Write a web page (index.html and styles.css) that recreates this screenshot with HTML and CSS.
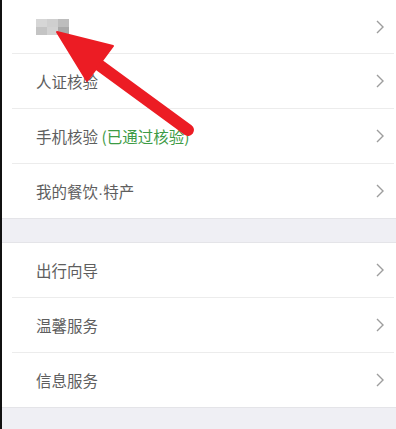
FILE: index.html
```html
<!DOCTYPE html>
<html lang="zh">
<head>
<meta charset="utf-8">
<link rel="stylesheet" href="styles.css">
</head>
<body>
<div class="screen">
  <div class="edge"></div>
  <div class="main">
    <div class="group">
      <div class="row first">
        <div class="label"><span class="blur"><i class="b1"></i><i class="b2"></i><i class="b3"></i><i class="b4"></i><i class="b5"></i><i class="b6"></i></span></div>
        <svg class="chev" viewBox="0 0 8 14"><path d="M1 1 L7 7 L1 13"/></svg>
      </div>
      <div class="row">
        <div class="label">人证核验</div>
        <svg class="chev" viewBox="0 0 8 14"><path d="M1 1 L7 7 L1 13"/></svg>
      </div>
      <div class="row">
        <div class="label">手机核验 <span class="ok">(已通过核验)</span></div>
        <svg class="chev" viewBox="0 0 8 14"><path d="M1 1 L7 7 L1 13"/></svg>
      </div>
      <div class="row">
        <div class="label">我的餐饮<span class="dot">·</span>特产</div>
        <svg class="chev" viewBox="0 0 8 14"><path d="M1 1 L7 7 L1 13"/></svg>
      </div>
    </div>
    <div class="gap"></div>
    <div class="group">
      <div class="row">
        <div class="label">出行向导</div>
        <svg class="chev" viewBox="0 0 8 14"><path d="M1 1 L7 7 L1 13"/></svg>
      </div>
      <div class="row">
        <div class="label">温馨服务</div>
        <svg class="chev" viewBox="0 0 8 14"><path d="M1 1 L7 7 L1 13"/></svg>
      </div>
      <div class="row">
        <div class="label">信息服务</div>
        <svg class="chev" viewBox="0 0 8 14"><path d="M1 1 L7 7 L1 13"/></svg>
      </div>
    </div>
    <div class="gap tail"></div>
  </div>
  <svg class="arrow" viewBox="0 0 396 429" width="396" height="429">
    <line x1="95" y1="62" x2="188" y2="130" stroke="#ec1c24" stroke-width="12" stroke-linecap="round"/>
    <polygon points="57,32 113,46 87,81" fill="#ec1c24" stroke="#ec1c24" stroke-width="2" stroke-linejoin="round"/>
  </svg>
</div>
</body>
</html>
```

FILE: styles.css
```css
html, body {
  margin: 0;
  padding: 0;
  background: #fff;
}
.screen {
  position: relative;
  width: 396px;
  height: 429px;
  overflow: hidden;
  display: flex;
  font-family: "Noto Sans CJK SC", "Noto Sans", sans-serif;
}
.edge {
  width: 2px;
  background: #111;
  flex: none;
}
.main {
  flex: 1;
  display: flex;
  flex-direction: column;
}
.group {
  background: #fff;
  padding-left: 10px;
}
.row {
  height: 54px;
  display: flex;
  align-items: center;
  justify-content: space-between;
  border-bottom: 1px solid #ececec;
  padding-left: 24px;
  padding-right: 10px;
  margin-right: 2px;
}
.row.first {
  height: 53px;
}
.group .row:last-child {
  border-bottom: none;
}
.label {
  font-size: 15.5px;
  color: #5e5e5e;
}
.dot {
  font-family: "Liberation Sans", sans-serif;
}
.ok {
  color: #3d9b45;
}
.chev {
  width: 8px;
  height: 14px;
  fill: none;
  stroke: #9d9d9d;
  stroke-width: 1.4;
}
.gap {
  height: 23px;
  background: #efeff4;
  border-top: 1px solid #e4e4e8;
  border-bottom: 1px solid #e4e4e8;
}
.gap.tail {
  flex: 1;
  border-bottom: none;
}
.blur {
  display: grid;
  grid-template-columns: repeat(3, 11px);
  grid-template-rows: 8px 8px;
  width: 33px;
  height: 16px;
}
.blur i { display: block; }
.b1 { background: #d6d6d6; }
.b2 { background: #cfcfcf; }
.b3 { background: #bdbdbd; }
.b4 { background: #c4c4c4; }
.b5 { background: #d2d2d2; }
.b6 { background: #a9a9a9; }
.arrow {
  position: absolute;
  left: 0;
  top: 0;
}
```
